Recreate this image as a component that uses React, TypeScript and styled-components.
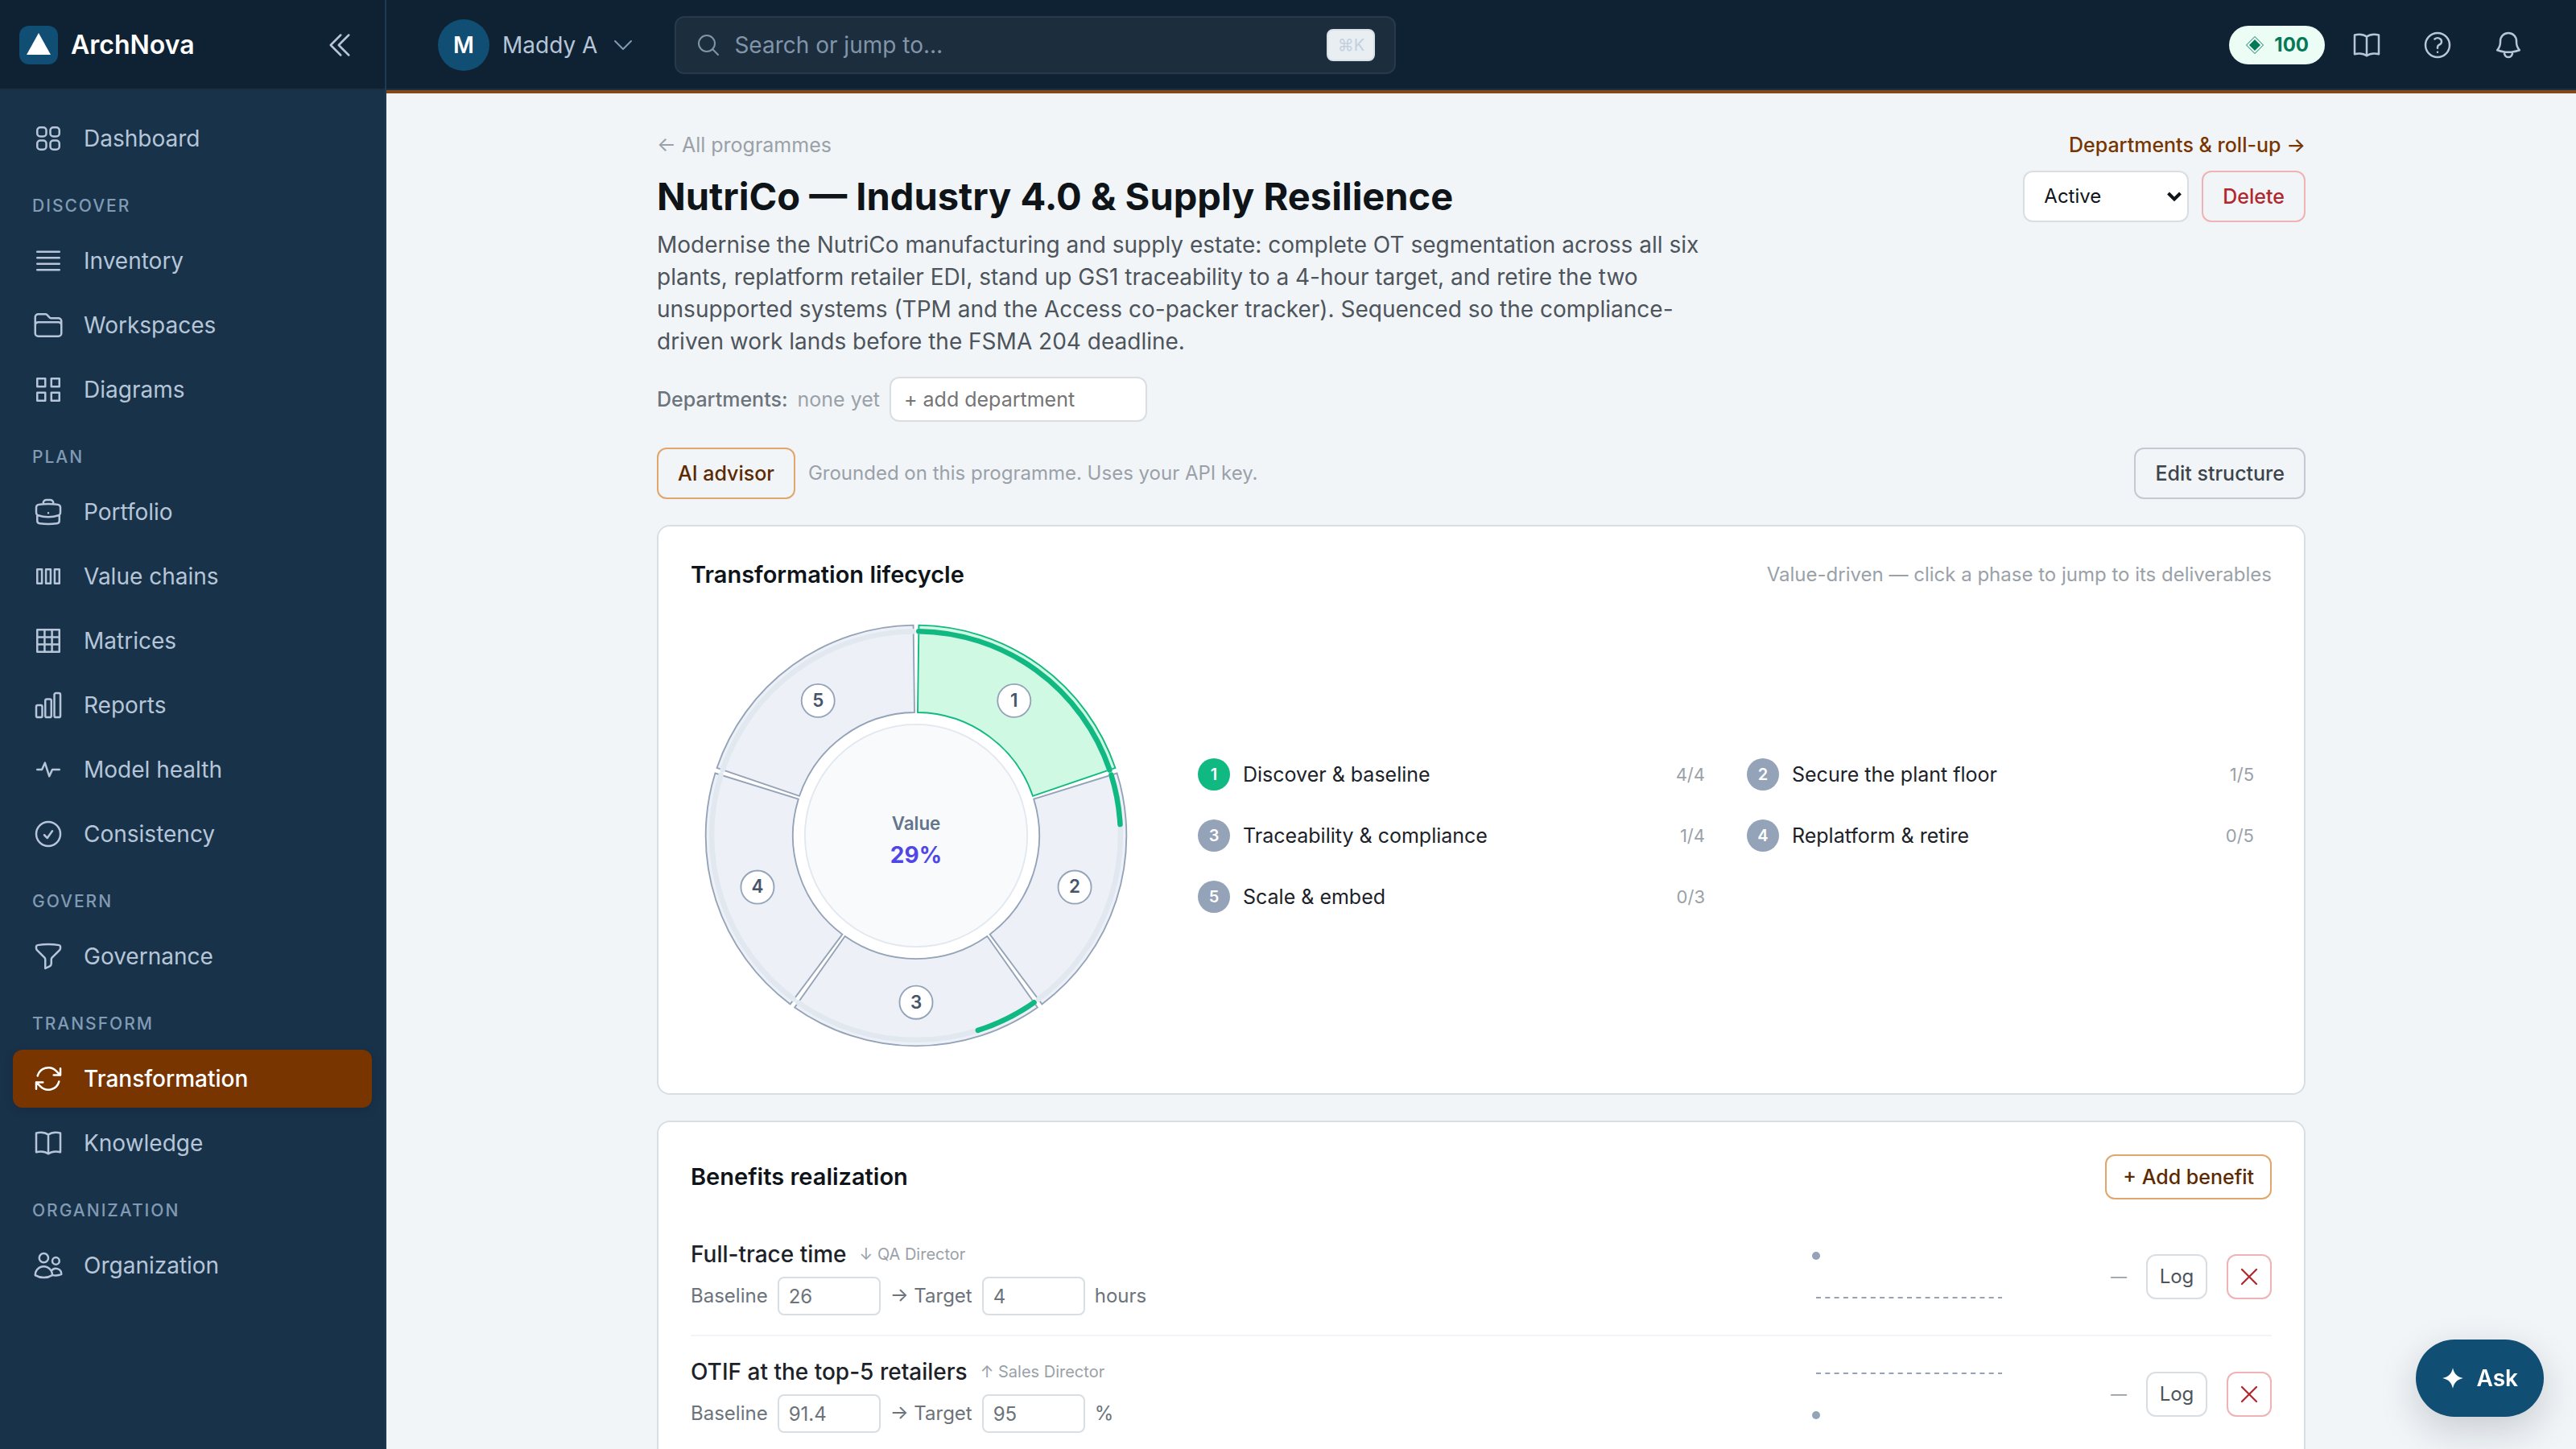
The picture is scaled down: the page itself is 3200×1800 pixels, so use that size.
import React from 'react';
import styled, { createGlobalStyle, css } from 'styled-components';
import {
  HiOutlineArrowPath,
  HiOutlineBars4,
  HiOutlineBell,
  HiOutlineBriefcase,
  HiOutlineChartBar,
  HiOutlineCheckCircle,
  HiOutlineChevronDoubleLeft,
  HiOutlineChevronDown,
  HiOutlineFolder,
  HiOutlineFunnel,
  HiOutlineMagnifyingGlass,
  HiOutlineQuestionMarkCircle,
  HiOutlineSquares2X2,
  HiOutlineUsers,
  HiOutlineXMark,
} from 'react-icons/hi2';

const sans = css`
  font-family: Inter, "DejaVu Sans", sans-serif;
`;

const GlobalStyle = createGlobalStyle`
  *, *:before, *:after {
    box-sizing: border-box;
  }

  body {
    margin: 0;
    background: #f1f5f8;
    color: #0f1419;
    ${sans}
    font-size: 28px;
    line-height: 40px;
  }

  h1, h2, h3, p, ul {
    margin: 0;
    padding: 0;
  }

  button, input, select {
    font: inherit;
    color: inherit;
    margin: 0;
  }

  button {
    cursor: pointer;
  }

  a {
    color: inherit;
    text-decoration: none;
  }
`;

/* ---------- shell ---------- */

const Shell = styled.div`
  display: flex;
  height: 100vh;
  overflow: hidden;
`;

const Sidebar = styled.aside`
  flex: 0 0 480px;
  display: flex;
  flex-direction: column;
  background: #18324a;
  border-right: 2px solid #213a50;
`;

const SidebarHeader = styled.div`
  display: flex;
  align-items: center;
  gap: 16px;
  height: 112px;
  padding: 0 24px;
  background: #0f2233;
  box-shadow: inset 0 -2px #1b2e40;
`;

const Logo = styled.svg`
  width: 48px;
  height: 48px;
`;

const Brand = styled.span`
  flex: 1;
  color: #ffffff;
  font-size: 32px;
  font-weight: 600;
`;

const IconButton = styled.button<{ $size?: number }>`
  display: grid;
  place-items: center;
  width: ${(props) => props.$size || 72}px;
  height: ${(props) => props.$size || 72}px;
  padding: 0;
  border: 0;
  border-radius: 12px;
  background: transparent;
  color: #b6c6d8;

  & svg {
    width: 40px;
    height: 40px;
  }
`;

const Nav = styled.nav`
  display: flex;
  flex-direction: column;
  gap: 8px;
  padding: 24px 16px;
`;

const NavLabel = styled.h3`
  padding: 24px 24px 8px;
  color: #819bb5;
  font-size: 21px;
  line-height: 32px;
  font-weight: 500;
  letter-spacing: 2px;
  text-transform: uppercase;
`;

const NavItem = styled.a<{ $active?: boolean }>`
  display: flex;
  align-items: center;
  gap: 24px;
  padding: 16px 24px;
  border-radius: 12px;
  color: #b6c6d8;

  & svg {
    flex: none;
    width: 40px;
    height: 40px;
  }

  ${(props) => props.$active && css`
    background: #783500;
    color: #ffffff;
    font-weight: 500;
    box-shadow: 0 2px 12px rgba(0, 0, 0, 0.15);
  `}
`;

const Body = styled.div`
  flex: 1;
  min-width: 0;
  display: flex;
  flex-direction: column;
`;

const Topbar = styled.header`
  flex: none;
  display: flex;
  align-items: center;
  height: 116px;
  padding: 0 48px 0 64px;
  background: #0f2233;
  border-bottom: 4px solid #854818;
  box-shadow: inset 0 -2px #1b2e40;
`;

const Account = styled.button`
  display: flex;
  align-items: center;
  gap: 16px;
  margin-right: 48px;
  padding: 0;
  border: 0;
  background: transparent;
  color: #b6c6d8;

  & svg {
    width: 32px;
    height: 32px;
    color: #819bb5;
  }
`;

const Avatar = styled.span`
  display: grid;
  place-items: center;
  width: 64px;
  height: 64px;
  border-radius: 50%;
  background: #114e73;
  color: #ffffff;
  font-weight: 600;
`;

const SearchBox = styled.label`
  flex: 0 1 896px;
  display: flex;
  align-items: center;
  gap: 16px;
  height: 72px;
  padding: 0 24px;
  border: 2px solid #27394a;
  border-radius: 12px;
  background: #1c2d3d;
  color: #8195aa;

  & svg {
    width: 32px;
    height: 32px;
  }
`;

const SearchInput = styled.input`
  flex: 1;
  min-width: 0;
  padding: 0;
  border: 0;
  outline: 0;
  background: transparent;

  &::placeholder {
    color: #8195aa;
    opacity: 1;
  }
`;

const Kbd = styled.kbd`
  display: grid;
  place-items: center;
  width: 60px;
  height: 40px;
  border: 2px solid #d9e0e6;
  border-radius: 8px;
  background: #e9eef3;
  color: #c3d0dd;
  ${sans}
  font-size: 20px;
  line-height: 32px;
`;

const TopActions = styled.div`
  display: flex;
  align-items: center;
  gap: 16px;
  margin-left: auto;
`;

const Score = styled.button`
  display: flex;
  align-items: center;
  gap: 12px;
  height: 48px;
  padding: 0 20px;
  border: 0;
  border-radius: 24px;
  background: #ecfdf5;
  color: #047857;
  font-size: 24px;
  font-weight: 700;

  & svg {
    width: 24px;
    height: 24px;
  }
`;

/* ---------- page ---------- */

const Main = styled.main`
  flex: 1;
  min-height: 0;
  overflow-y: auto;
  scrollbar-width: none;
`;

const Page = styled.div`
  max-width: 2048px;
  margin: 0 auto;
  padding: 48px 0;
`;

const Between = styled.div`
  display: flex;
  align-items: center;
  justify-content: space-between;
`;

const Crumbs = styled(Between)`
  margin-bottom: 16px;
  color: #9aa1a8;
  font-size: 25px;
  line-height: 32px;
`;

const RollUpLink = styled.a`
  color: #783500;
  font-weight: 500;
`;

const Intro = styled(Between)`
  align-items: flex-start;
  margin-bottom: 24px;
`;

const Title = styled.h1`
  margin-bottom: 8px;
  font-size: 47px;
  line-height: 64px;
  font-weight: 700;
`;

const Description = styled.p`
  max-width: 1344px;
  color: #4d545b;
`;

const Controls = styled.div`
  display: flex;
  gap: 16px;
`;

// the arrow shares the grid cell of the select and lets clicks through
const SelectWrap = styled.div`
  display: grid;
  align-items: center;

  & > * {
    grid-area: 1 / 1;
  }

  & svg {
    justify-self: end;
    width: 20px;
    height: 20px;
    margin-right: 8px;
    pointer-events: none;
  }
`;

const StatusSelect = styled.select`
  appearance: none;
  width: 206px;
  height: 64px;
  padding: 0 24px;
  border: 2px solid #d9dee3;
  border-radius: 12px;
  background: #ffffff;
  font-size: 24px;
`;

const tones = {
  accent: css`
    border-color: #e0a76c;
    color: #5c2900;
  `,
  danger: css`
    border-color: #efb3b5;
    color: #b3262b;
  `,
  neutral: css`
    border-color: #c3cad1;
    color: #3d444b;
  `,
  quiet: css`
    border-color: #d9dee3;
    color: #4d545b;
  `,
};

const Button = styled.button<{ $tone: keyof typeof tones; $small?: boolean }>`
  display: inline-flex;
  align-items: center;
  justify-content: center;
  height: ${(props) => (props.$small ? 56 : 64)}px;
  padding: 0 ${(props) => (props.$small ? 20 : 24)}px;
  border: 2px solid;
  border-radius: 12px;
  background: transparent;
  font-size: 25px;
  line-height: 32px;
  font-weight: 500;
  white-space: nowrap;
  ${(props) => tones[props.$tone]}
`;

const LogButton = styled(Button)`
  padding: 0;
  width: 76px;
  font-size: 24px;
  font-weight: 400;
`;

const RemoveButton = styled(Button)`
  padding: 0;
  width: 56px;

  & svg {
    width: 36px;
    height: 36px;
  }
`;

const Departments = styled.div`
  display: flex;
  align-items: center;
  gap: 12px;
  margin-bottom: 32px;
  color: #9aa1a8;
  font-size: 25px;
  line-height: 32px;
`;

const DepartmentsLabel = styled.label`
  color: #6c737a;
  font-weight: 500;
`;

const DepartmentInput = styled.input`
  width: 320px;
  height: 56px;
  padding: 0 16px;
  border: 2px solid #d9dee3;
  border-radius: 12px;
  background: #ffffff;

  &::placeholder {
    color: #757575;
    opacity: 1;
  }
`;

const Hint = styled.span`
  color: #9aa1a8;
  font-size: 24px;
  line-height: 32px;
`;

const AdvisorRow = styled.div`
  display: flex;
  align-items: center;
  gap: 16px;
  margin-bottom: 32px;

  & > :last-child {
    margin-left: auto;
  }
`;

const Card = styled.section`
  margin-bottom: 32px;
  padding: 40px;
  border: 2px solid #d9dee3;
  border-radius: 16px;
  background: #ffffff;
`;

const CardTitle = styled.h2`
  font-size: 29px;
  line-height: 40px;
  font-weight: 600;
`;

const Lifecycle = styled.div`
  display: flex;
  align-items: center;
  gap: 48px;
  margin-top: 24px;
`;

const Wheel = styled.svg`
  flex: none;
  width: 560px;
  height: 560px;

  & text {
    text-anchor: middle;
    ${sans}
  }
`;

const Legend = styled.div`
  flex: 1;
  display: grid;
  grid-template-columns: 1fr 1fr;
  gap: 8px;
`;

const LegendItem = styled.button`
  display: flex;
  align-items: center;
  gap: 16px;
  padding: 12px 20px;
  border: 2px solid transparent;
  border-radius: 12px;
  background: transparent;
  color: #1c2228;
  font-size: 25px;
  line-height: 40px;
`;

const Dot = styled.span<{ $done: boolean }>`
  display: grid;
  place-items: center;
  width: 40px;
  height: 40px;
  border-radius: 50%;
  background: ${(props) => (props.$done ? '#10b981' : '#94a3b8')};
  color: #ffffff;
  font-size: 20px;
  font-weight: 600;
`;

const Count = styled.span`
  margin-left: auto;
  color: #9aa1a8;
  font-size: 22px;
`;

const BenefitList = styled.ul`
  margin-top: 24px;
  list-style: none;
`;

const Benefit = styled.li`
  display: flex;
  align-items: center;
  gap: 24px;
  padding: 24px 0;

  & + & {
    border-top: 2px solid #f1f5f9;
  }
`;

const BenefitInfo = styled.div`
  flex: 1;
`;

const BenefitName = styled.div`
  display: flex;
  align-items: center;
  gap: 16px;
  margin-bottom: 8px;
  color: #1c2228;
  font-weight: 500;
`;

const Owner = styled.span`
  color: #9aa1a8;
  font-size: 20px;
  font-weight: 400;
`;

const Measures = styled.div`
  display: flex;
  align-items: center;
  gap: 12px;
  color: #6c737a;
  font-size: 24px;
  line-height: 32px;

  & label {
    display: flex;
    align-items: center;
    gap: 12px;
  }
`;

const ValueInput = styled.input`
  width: 128px;
  height: 48px;
  padding: 0 12px;
  border: 2px solid #d9dee3;
  border-radius: 8px;
  background: #ffffff;
`;

const Spark = styled.svg`
  width: 240px;
  height: 64px;
`;

const Latest = styled.span`
  width: 128px;
  color: #9aa1a8;
  font-size: 20px;
  text-align: right;
`;

const AskButton = styled.button`
  position: fixed;
  right: 40px;
  bottom: 40px;
  display: flex;
  align-items: center;
  gap: 16px;
  height: 96px;
  padding: 0 32px;
  border: 0;
  border-radius: 48px;
  background: #114e73;
  color: #ffffff;
  font-weight: 600;
  box-shadow: 0 16px 48px rgba(15, 20, 25, 0.18);

  & svg {
    width: 28px;
    height: 28px;
  }
`;

/* ---------- icons missing from the pack ---------- */

const Stroke = ({ d }: { d: string }) => (
  <svg
    viewBox="0 0 24 24"
    fill="none"
    stroke="currentColor"
    strokeWidth="1.5"
    strokeLinecap="round"
    strokeLinejoin="round"
    aria-hidden="true"
  >
    <path d={d} />
  </svg>
);

const DiagramIcon = () => (
  <Stroke d="M3.75 3.75h6v6h-6zM14.25 3.75h6v6h-6zM3.75 14.25h6v6h-6zM14.25 14.25h6v6h-6z" />
);
const ChainIcon = () => (
  <Stroke d="M3.75 6.75h3.5v10.5h-3.5zM10.25 6.75h3.5v10.5h-3.5zM16.75 6.75h3.5v10.5h-3.5z" />
);
const MatrixIcon = () => (
  <Stroke d="M3.75 3.75h16.5v16.5H3.75zM3.75 9.25h16.5M3.75 14.75h16.5M9.25 3.75v16.5M14.75 3.75v16.5" />
);
const PulseIcon = () => <Stroke d="M3.75 12h3.5l2.25-5 3.25 10L15 12h5.25" />;
const BookIcon = () => (
  <Stroke d="M12 5.75C10 4.25 6.5 3.75 3 4.5v14.25c3.5-.75 7-.25 9 1.25M12 5.75c2-1.5 5.5-2 9-1.25v14.25c-3.5-.75-7-.25-9 1.25M12 5.75V20" />
);

/* ---------- data ---------- */

const navGroups = [
  { label: '', items: [{ name: 'Dashboard', icon: HiOutlineSquares2X2 }] },
  {
    label: 'Discover',
    items: [
      { name: 'Inventory', icon: HiOutlineBars4 },
      { name: 'Workspaces', icon: HiOutlineFolder },
      { name: 'Diagrams', icon: DiagramIcon },
    ],
  },
  {
    label: 'Plan',
    items: [
      { name: 'Portfolio', icon: HiOutlineBriefcase },
      { name: 'Value chains', icon: ChainIcon },
      { name: 'Matrices', icon: MatrixIcon },
      { name: 'Reports', icon: HiOutlineChartBar },
      { name: 'Model health', icon: PulseIcon },
      { name: 'Consistency', icon: HiOutlineCheckCircle },
    ],
  },
  { label: 'Govern', items: [{ name: 'Governance', icon: HiOutlineFunnel }] },
  {
    label: 'Transform',
    items: [
      { name: 'Transformation', icon: HiOutlineArrowPath },
      { name: 'Knowledge', icon: BookIcon },
    ],
  },
  { label: 'Organization', items: [{ name: 'Organization', icon: HiOutlineUsers }] },
];

const phases = [
  { name: 'Discover & baseline', done: 4, total: 4 },
  { name: 'Secure the plant floor', done: 1, total: 5 },
  { name: 'Traceability & compliance', done: 1, total: 4 },
  { name: 'Replatform & retire', done: 0, total: 5 },
  { name: 'Scale & embed', done: 0, total: 3 },
];

const benefits = [
  { name: 'Full-trace time', owner: '↓ QA Director', baseline: '26', target: '4', unit: 'hours', lowerIsBetter: true },
  { name: 'OTIF at the top-5 retailers', owner: '↑ Sales Director', baseline: '91.4', target: '95', unit: '%', lowerIsBetter: false },
];

/* ---------- lifecycle wheel ---------- */

const CENTER = 150;
const OUTER = 140;
const INNER = 82;
const TRACK = 136;
const GAP = 0.75;

// angle in degrees, clockwise from the top
const point = (r: number, angle: number) => {
  const rad = ((angle - 90) * Math.PI) / 180;
  return `${(CENTER + r * Math.cos(rad)).toFixed(2)} ${(CENTER + r * Math.sin(rad)).toFixed(2)}`;
};

const arc = (r: number, from: number, to: number) => `M${point(r, from)}A${r} ${r} 0 0 1 ${point(r, to)}`;

const slice = (from: number, to: number) => (
  `${arc(OUTER, from, to)}L${point(INNER, to)}A${INNER} ${INNER} 0 0 0 ${point(INNER, from)}Z`
);

function LifecycleWheel() {
  const step = 360 / phases.length;
  return (
    <Wheel viewBox="0 0 300 300" role="img" aria-label="Transformation lifecycle">
      {phases.map((phase, i) => {
        const from = i * step + GAP;
        const to = (i + 1) * step - GAP;
        const complete = phase.done === phase.total;
        const [x, y] = point((OUTER + INNER) / 2, (i + 0.5) * step).split(' ').map(Number);
        return (
          <g key={phase.name}>
            <path
              d={slice(from, to)}
              fill={complete ? '#d0f9e4' : '#edf1f7'}
              stroke={complete ? '#10b981' : '#94a3b8'}
            />
            <path d={arc(TRACK, from, to)} fill="none" stroke="#e2e8f0" strokeWidth="3.5" strokeLinecap="round" />
            {phase.done > 0 && (
              <path
                d={arc(TRACK, from, from + ((to - from) * phase.done) / phase.total)}
                fill="none"
                stroke="#10b981"
                strokeWidth="3.5"
                strokeLinecap="round"
              />
            )}
            <circle cx={x} cy={y} r="11" fill="#ffffff" stroke="#94a3b8" />
            <text x={x} y={y + 4} fontSize="12" fontWeight="600" fill="#475569">{i + 1}</text>
          </g>
        );
      })}
      <circle cx={CENTER} cy={CENTER} r="74" fill="#f8fafc" stroke="#e2e8f0" />
      <text x={CENTER} y="146" fontSize="12" fontWeight="600" fill="#64748b">Value</text>
      <text x={CENTER} y="168" fontSize="15" fontWeight="700" fill="#4f46e5">29%</text>
    </Wheel>
  );
}

export default function App() {
  return (
    <>
      <GlobalStyle />
      <Shell>
        <Sidebar>
          <SidebarHeader>
            <Logo viewBox="0 0 48 48" aria-hidden="true">
              <rect width="48" height="48" rx="12" fill="#114e73" />
              <path d="M24 9l15 27H9z" fill="#ffffff" />
            </Logo>
            <Brand>ArchNova</Brand>
            <IconButton $size={64} aria-label="Collapse sidebar">
              <HiOutlineChevronDoubleLeft />
            </IconButton>
          </SidebarHeader>
          <Nav>
            {navGroups.map((group) => (
              <React.Fragment key={group.label}>
                {group.label && <NavLabel>{group.label}</NavLabel>}
                {group.items.map(({ name, icon: Icon }) => (
                  <NavItem key={name} href="#" $active={name === 'Transformation'}>
                    <Icon />
                    {name}
                  </NavItem>
                ))}
              </React.Fragment>
            ))}
          </Nav>
        </Sidebar>

        <Body>
          <Topbar>
            <Account>
              <Avatar>M</Avatar>
              Maddy A
              <HiOutlineChevronDown />
            </Account>
            <SearchBox>
              <HiOutlineMagnifyingGlass />
              <SearchInput type="text" placeholder="Search or jump to…" aria-label="Search or jump to" />
              <Kbd>⌘K</Kbd>
            </SearchBox>
            <TopActions>
              <Score>
                <svg viewBox="0 0 24 24" aria-hidden="true">
                  <path d="M12 1.5L22.5 12 12 22.5 1.5 12z" fill="none" stroke="currentColor" />
                  <path d="M12 5l7 7-7 7-7-7z" fill="currentColor" />
                </svg>
                100
              </Score>
              <IconButton aria-label="Guide"><BookIcon /></IconButton>
              <IconButton aria-label="Help"><HiOutlineQuestionMarkCircle /></IconButton>
              <IconButton aria-label="Notifications"><HiOutlineBell /></IconButton>
            </TopActions>
          </Topbar>

          <Main>
            <Page>
              <Crumbs>
                <a href="#">← All programmes</a>
                <RollUpLink href="#">Departments &amp; roll-up →</RollUpLink>
              </Crumbs>
              <Intro>
                <div>
                  <Title>NutriCo — Industry 4.0 &amp; Supply Resilience</Title>
                  <Description>
                    Modernise the NutriCo manufacturing and supply estate: complete OT segmentation across all six
                    plants, replatform retailer EDI, stand up GS1 traceability to a 4-hour target, and retire the two
                    unsupported systems (TPM and the Access co-packer tracker). Sequenced so the compliance-driven
                    work lands before the FSMA 204 deadline.
                  </Description>
                </div>
                <Controls>
                  <SelectWrap>
                    <StatusSelect aria-label="Status" defaultValue="Active">
                      <option>Active</option>
                      <option>Completed</option>
                    </StatusSelect>
                    <svg viewBox="0 0 20 20" aria-hidden="true">
                      <path d="M2.5 6l7.5 7.5L17.5 6" fill="none" stroke="currentColor" strokeWidth="4" />
                    </svg>
                  </SelectWrap>
                  <Button $tone="danger">Delete</Button>
                </Controls>
              </Intro>

              <Departments>
                <DepartmentsLabel htmlFor="department">Departments:</DepartmentsLabel>
                <span>none yet</span>
                <DepartmentInput id="department" type="text" placeholder="+ add department" />
              </Departments>

              <AdvisorRow>
                <Button $tone="accent">AI advisor</Button>
                <Hint>Grounded on this programme. Uses your API key.</Hint>
                <Button $tone="neutral">Edit structure</Button>
              </AdvisorRow>

              <Card>
                <Between>
                  <CardTitle>Transformation lifecycle</CardTitle>
                  <Hint>Value-driven — click a phase to jump to its deliverables</Hint>
                </Between>
                <Lifecycle>
                  <LifecycleWheel />
                  <Legend>
                    {phases.map((phase, i) => (
                      <LegendItem key={phase.name}>
                        <Dot $done={phase.done === phase.total}>{i + 1}</Dot>
                        {phase.name}
                        <Count>{`${phase.done}/${phase.total}`}</Count>
                      </LegendItem>
                    ))}
                  </Legend>
                </Lifecycle>
              </Card>

              <Card>
                <Between>
                  <CardTitle>Benefits realization</CardTitle>
                  <Button $tone="accent" $small>+ Add benefit</Button>
                </Between>
                <BenefitList>
                  {benefits.map((benefit) => (
                    <Benefit key={benefit.name}>
                      <BenefitInfo>
                        <BenefitName>
                          {benefit.name}
                          <Owner>{benefit.owner}</Owner>
                        </BenefitName>
                        <Measures>
                          <label>
                            Baseline
                            <ValueInput type="text" defaultValue={benefit.baseline} />
                          </label>
                          <label>
                            → Target
                            <ValueInput type="text" defaultValue={benefit.target} />
                          </label>
                          {benefit.unit}
                        </Measures>
                      </BenefitInfo>
                      <Spark viewBox="0 0 240 64" aria-hidden="true">
                        <path
                          d={benefit.lowerIsBetter ? 'M6 58h231' : 'M6 6h231'}
                          stroke="#94a3b8"
                          strokeWidth="2"
                          strokeDasharray="6 5.3"
                        />
                        <circle cx="6" cy={benefit.lowerIsBetter ? 6 : 58} r="5" fill="#94a3b8" />
                      </Spark>
                      <Latest>—</Latest>
                      <LogButton $tone="quiet" $small>Log</LogButton>
                      <RemoveButton $tone="danger" $small aria-label={`Remove ${benefit.name}`}>
                        <HiOutlineXMark />
                      </RemoveButton>
                    </Benefit>
                  ))}
                </BenefitList>
              </Card>
            </Page>
          </Main>
        </Body>
      </Shell>
      <AskButton>
        <svg viewBox="0 0 24 24" aria-hidden="true">
          <path d="M12 1c1.500 6.500 4.500 9.500 11 11-6.500 1.500-9.500 4.500-11 11-1.500-6.500-4.500-9.500-11-11 6.500-1.500 9.500-4.500 11-11z" fill="currentColor" />
        </svg>
        Ask
      </AskButton>
    </>
  );
}
